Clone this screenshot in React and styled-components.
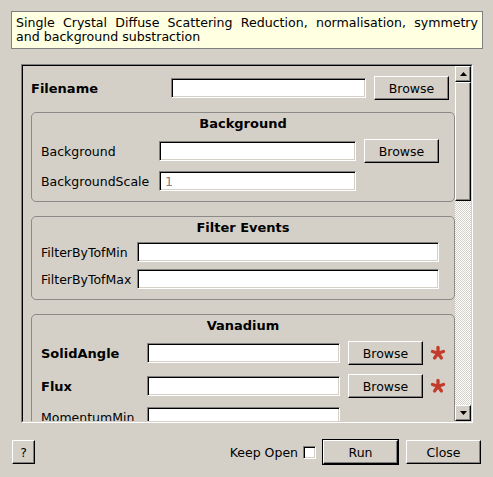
import React from 'react';
import styled, { createGlobalStyle, css } from 'styled-components';

const Global = createGlobalStyle`
  html, body { margin: 0; padding: 0; background: #d4d0c8; }
  body { font-family: "DejaVu Sans", "Liberation Sans", sans-serif; font-size: 12.5px; color: #000; }
  * { box-sizing: border-box; }
`;

const raised = css`
  border: 1px solid;
  border-color: #fff #000 #000 #fff;
  box-shadow: inset -1px -1px 0 #808080;
  background: #d4d0c8;
`;

const Window = styled.div`
  width: 493px;
  height: 477px;
  background: #d4d0c8;
  padding: 11px 10px 0 11px;
  display: flex;
  flex-direction: column;
  overflow: hidden;
`;

const Description = styled.div`
  height: 38px;
  border: 1px solid #7f7f7f;
  background: #ffffe1;
  padding: 4px 4px 3px;
  font-size: 12.6px;
  line-height: 14px;
`;

const JustLine = styled.div`
  text-align: justify;
  text-align-last: justify;
`;

const Frame = styled.div`
  margin: 15px 0 0 10px;
  width: 452px;
  height: 359px;
  flex: none;
  border: 1px solid;
  border-color: #808080 #fff #fff #808080;
`;

const FrameInner = styled.div`
  height: 100%;
  border: 1px solid;
  border-color: #000 #d4d0c8 #d4d0c8 #000;
  display: flex;
`;

const Viewport = styled.div`
  flex: 1;
  overflow: hidden;
  padding: 10px 0 0 8px;
`;

const Scrollbar = styled.div`
  width: 16px;
  flex: none;
  display: flex;
  flex-direction: column;
`;

const ScrollButton = styled.div`
  ${raised};
  height: 16px;
  flex: none;
  display: flex;
  align-items: center;
  justify-content: center;
`;

const Thumb = styled.div`
  ${raised};
  height: 119px;
  flex: none;
`;

const Track = styled.div`
  flex: 1;
  background: repeating-conic-gradient(#ffffff 0 25%, #d4d0c8 0 50%) 0 0 / 2px 2px;
`;

const Row = styled.div`
  display: grid;
  grid-template-columns: ${p => p.$cols};
  column-gap: 8px;
  align-items: center;
`;

const Label = styled.span`
  white-space: nowrap;
  font-weight: ${p => (p.$bold ? 'bold' : 'normal')};
  font-size: ${p => (p.$bold ? '13px' : '12.5px')};
`;

const Field = styled.input`
  width: 100%;
  height: 20px;
  border: 1px solid;
  border-color: #808080 #fff #fff #808080;
  box-shadow: inset 1px 1px 0 #000, inset -1px -1px 0 #d4d0c8;
  background: #fff;
  padding: 0 5px;
  font: inherit;
  color: #000;
  outline: none;
  &::placeholder { color: #808080; }
`;

const Button = styled.button`
  ${raised};
  width: ${p => p.$w || 75}px;
  height: 24px;
  flex: none;
  padding: 0;
  font: inherit;
  color: #000;
  display: flex;
  align-items: center;
  justify-content: center;
  ${p => p.$default && css`
    box-shadow: 0 0 0 1px #000, inset -1px -1px 0 #808080;
  `}
`;

const Group = styled.div`
  margin-top: ${p => p.$mt}px;
  border: 1px solid #8c8a86;
  border-radius: 5px;
`;

const GroupTitle = styled.div`
  height: 21px;
  line-height: 21px;
  text-align: center;
  font-weight: bold;
  font-size: 13px;
`;

const GroupBody = styled.div`
  display: flex;
  flex-direction: column;
  gap: ${p => p.$gap}px;
  padding: ${p => p.$pt}px 0 10px 9px;
`;

const Asterisk = styled.svg`
  width: 16px;
  height: 16px;
  display: block;
  margin-left: -1px;
`;

const BottomBar = styled.div`
  margin: 16px 2px 0 1px;
  height: 26px;
  display: flex;
  align-items: center;
`;

const Spacer = styled.div`
  flex: 1;
`;

const CheckBox = styled.span`
  width: 13px;
  height: 13px;
  flex: none;
  margin-left: 5px;
  border: 1px solid;
  border-color: #808080 #fff #fff #808080;
  box-shadow: inset 1px 1px 0 #000, inset -1px -1px 0 #d4d0c8;
  background: #fff;
`;

const BarGap = styled.div`
  width: ${p => p.$w}px;
  flex: none;
`;

function Star() {
  const arms = [0, 72, 144, 216, 288].map(a => {
    const r = (a - 90) * Math.PI / 180;
    return [8 + Math.cos(r) * 5.8, 8 + Math.sin(r) * 5.8];
  });
  return (
    <Asterisk viewBox="0 0 16 16">
      {arms.map(([x, y], i) => (
        <line key={i} x1="8" y1="8.3" x2={x} y2={y + 0.3} stroke="#c23b2b" strokeWidth="3.3" strokeLinecap="round" />
      ))}
    </Asterisk>
  );
}

function Arrow({ down }) {
  return (
    <svg width="7" height="4" viewBox="0 0 7 4" style={{ display: 'block' }}>
      <polygon points={down ? '0,0 7,0 3.5,4' : '0,4 7,4 3.5,0'} fill="#000" />
    </svg>
  );
}

export default function App() {
  return (
    <>
      <Global />
      <Window>
        <Description>
          <JustLine>Single Crystal Diffuse Scattering Reduction, normalisation, symmetry</JustLine>
          <div>and background substraction</div>
        </Description>
        <Frame>
          <FrameInner>
            <Viewport>
              <Row $cols="132px 195px 75px">
                <Label $bold>Filename</Label>
                <Field />
                <Button>Browse</Button>
              </Row>
              <Group $mt={12}>
                <GroupTitle>Background</GroupTitle>
                <GroupBody $pt={5} $gap={8}>
                  <Row $cols="110px 197px 75px">
                    <Label>Background</Label>
                    <Field />
                    <Button>Browse</Button>
                  </Row>
                  <Row $cols="110px 197px">
                    <Label>BackgroundScale</Label>
                    <Field placeholder="1" />
                  </Row>
                </GroupBody>
              </Group>
              <Group $mt={14}>
                <GroupTitle>Filter Events</GroupTitle>
                <GroupBody $pt={4} $gap={7}>
                  <Row $cols="88px 302px">
                    <Label>FilterByTofMin</Label>
                    <Field />
                  </Row>
                  <Row $cols="88px 302px">
                    <Label>FilterByTofMax</Label>
                    <Field />
                  </Row>
                </GroupBody>
              </Group>
              <Group $mt={14}>
                <GroupTitle>Vanadium</GroupTitle>
                <GroupBody $pt={5} $gap={9}>
                  <Row $cols="98px 193px 75px 16px">
                    <Label $bold>SolidAngle</Label>
                    <Field />
                    <Button>Browse</Button>
                    <Star />
                  </Row>
                  <Row $cols="98px 193px 75px 16px">
                    <Label $bold>Flux</Label>
                    <Field />
                    <Button>Browse</Button>
                    <Star />
                  </Row>
                  <Row $cols="98px 193px">
                    <Label>MomentumMin</Label>
                    <Field />
                  </Row>
                </GroupBody>
              </Group>
            </Viewport>
            <Scrollbar>
              <ScrollButton><Arrow /></ScrollButton>
              <Thumb />
              <Track />
              <ScrollButton><Arrow down /></ScrollButton>
            </Scrollbar>
          </FrameInner>
        </Frame>
        <BottomBar>
          <Button $w={23}>?</Button>
          <Spacer />
          <Label>Keep Open</Label>
          <CheckBox />
          <BarGap $w={7} />
          <Button $default>Run</Button>
          <BarGap $w={8} />
          <Button>Close</Button>
        </BottomBar>
      </Window>
    </>
  );
}
